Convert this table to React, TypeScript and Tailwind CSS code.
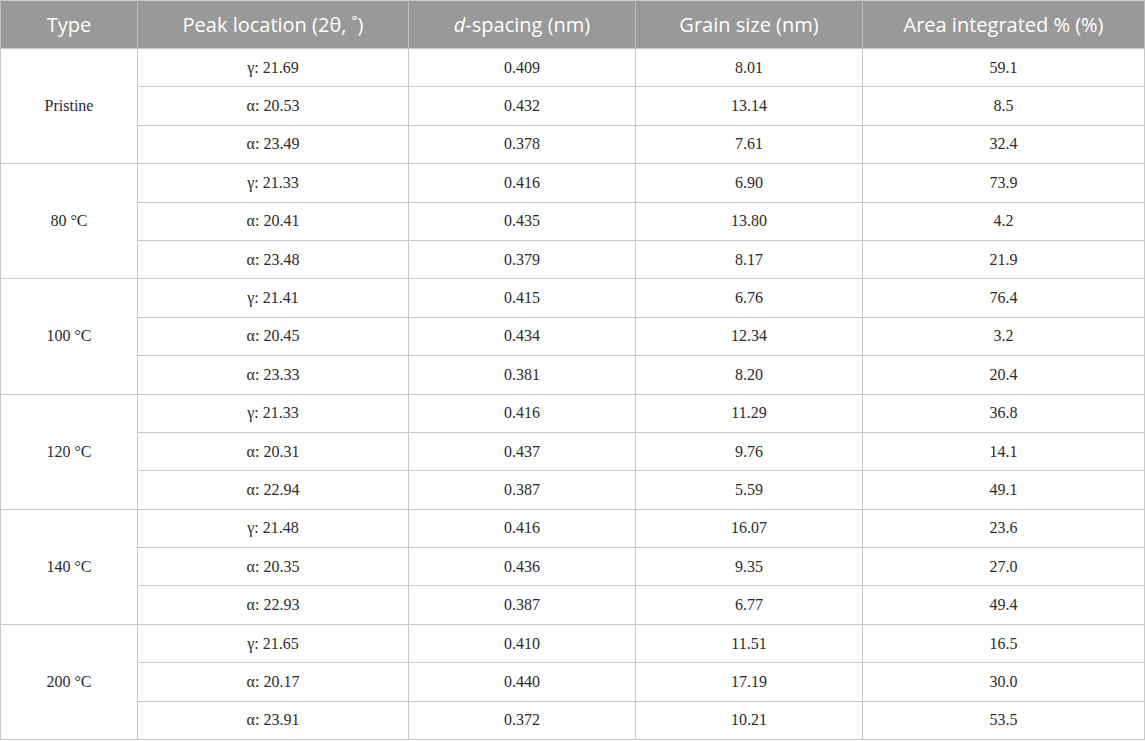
const groups = [
  {
    type: 'Pristine',
    rows: [
      ['γ: 21.69', '0.409', '8.01', '59.1'],
      ['α: 20.53', '0.432', '13.14', '8.5'],
      ['α: 23.49', '0.378', '7.61', '32.4'],
    ],
  },
  {
    type: '80 °C',
    rows: [
      ['γ: 21.33', '0.416', '6.90', '73.9'],
      ['α: 20.41', '0.435', '13.80', '4.2'],
      ['α: 23.48', '0.379', '8.17', '21.9'],
    ],
  },
  {
    type: '100 °C',
    rows: [
      ['γ: 21.41', '0.415', '6.76', '76.4'],
      ['α: 20.45', '0.434', '12.34', '3.2'],
      ['α: 23.33', '0.381', '8.20', '20.4'],
    ],
  },
  {
    type: '120 °C',
    rows: [
      ['γ: 21.33', '0.416', '11.29', '36.8'],
      ['α: 20.31', '0.437', '9.76', '14.1'],
      ['α: 22.94', '0.387', '5.59', '49.1'],
    ],
  },
  {
    type: '140 °C',
    rows: [
      ['γ: 21.48', '0.416', '16.07', '23.6'],
      ['α: 20.35', '0.436', '9.35', '27.0'],
      ['α: 22.93', '0.387', '6.77', '49.4'],
    ],
  },
  {
    type: '200 °C',
    rows: [
      ['γ: 21.65', '0.410', '11.51', '16.5'],
      ['α: 20.17', '0.440', '17.19', '30.0'],
      ['α: 23.91', '0.372', '10.21', '53.5'],
    ],
  },
]

const th = 'border-x border-[#bdbdbd] font-normal text-white text-[20px] text-center px-2'
const td = 'border border-[#c8c8c8] text-center text-[16px] text-[#2b2b2b] h-[38.4px] px-2'

export default function App() {
  return (
    <div className="w-[1145px] h-[741px] bg-white">
      <table
        className="w-[1144px] border-collapse table-fixed"
        style={{ fontFamily: '"Liberation Serif", "Times New Roman", serif' }}
      >
        <colgroup>
          <col className="w-[137px]" />
          <col className="w-[271px]" />
          <col className="w-[227px]" />
          <col className="w-[227px]" />
          <col className="w-[282px]" />
        </colgroup>
        <thead>
          <tr
            className="h-[48px] bg-[#999999] border-t border-[#cfcfcf]"
            style={{ fontFamily: '"Open Sans", "Noto Sans", sans-serif' }}
          >
            <th className={th}>Type</th>
            <th className={th}>Peak location (2θ, ˚)</th>
            <th className={th}>
              <span className="italic">d</span>-spacing (nm)
            </th>
            <th className={th}>Grain size (nm)</th>
            <th className={th}>Area integrated % (%)</th>
          </tr>
        </thead>
        <tbody>
          {groups.map((g) =>
            g.rows.map((r, i) => (
              <tr key={g.type + i}>
                {i === 0 && (
                  <td rowSpan={3} className={td}>
                    {g.type}
                  </td>
                )}
                {r.map((c, j) => (
                  <td key={j} className={td}>
                    {c}
                  </td>
                ))}
              </tr>
            ))
          )}
        </tbody>
      </table>
    </div>
  )
}
